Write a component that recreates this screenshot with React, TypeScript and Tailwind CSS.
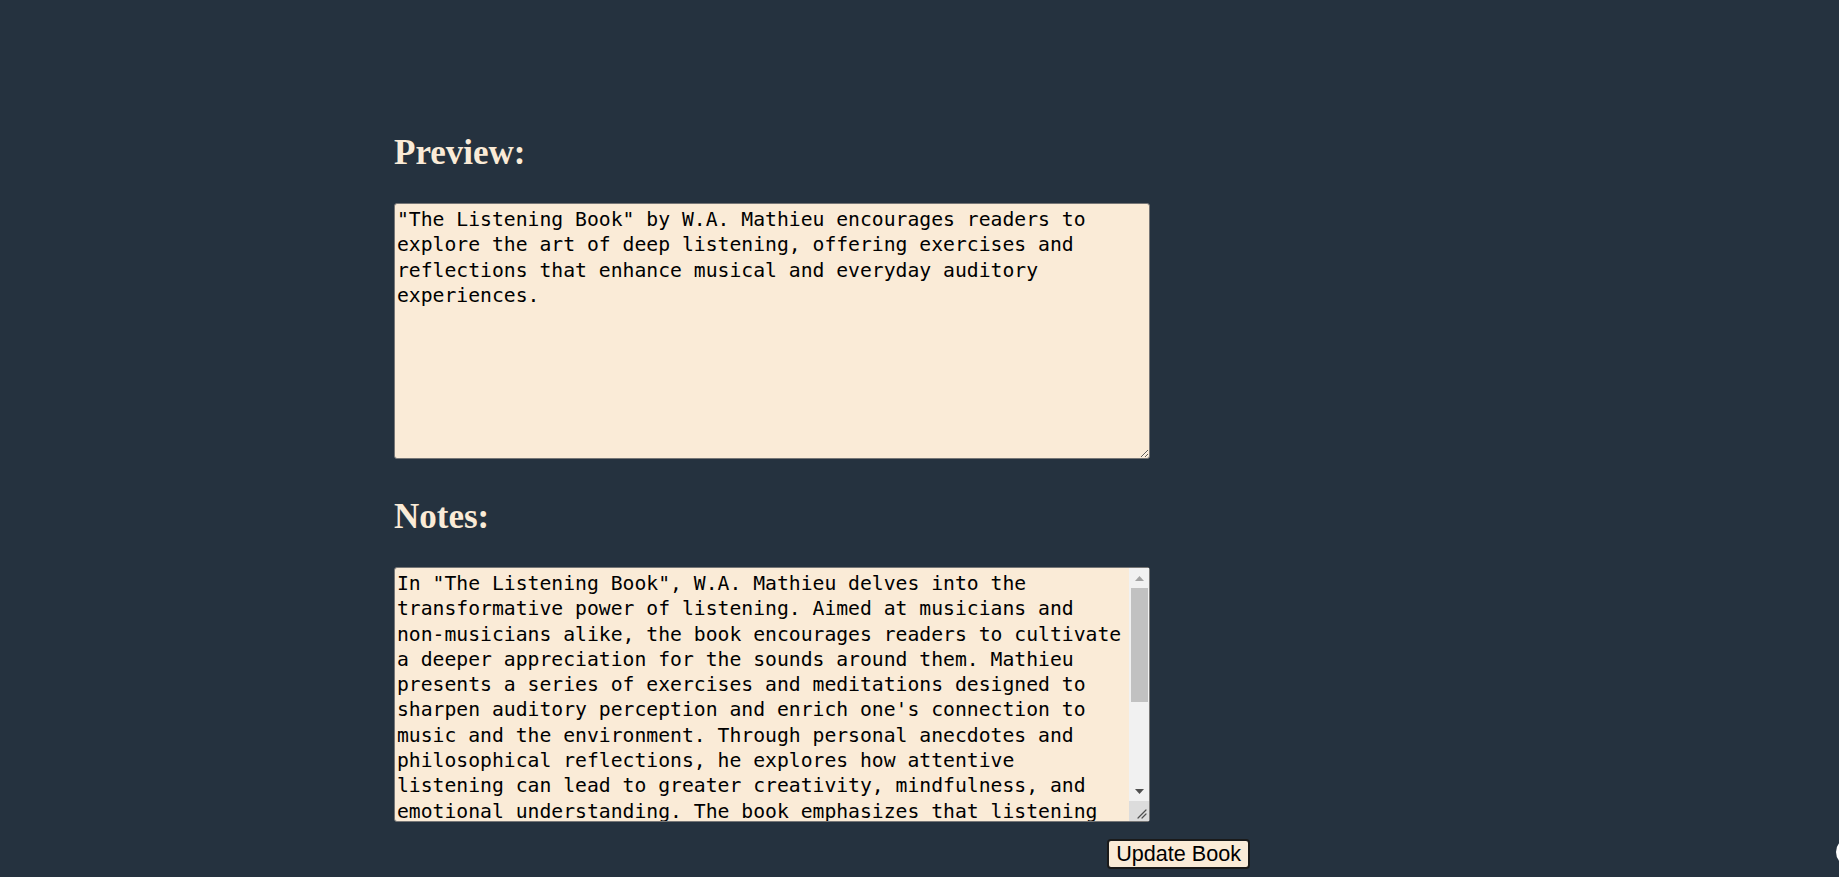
import React, { useState } from "react";

const PREVIEW_TEXT =
    '"The Listening Book" by W.A. Mathieu encourages readers to explore the art of deep listening, offering exercises and reflections that enhance musical and everyday auditory experiences.';

const NOTES_TEXT =
    'In "The Listening Book", W.A. Mathieu delves into the transformative power of listening. Aimed at musicians and non-musicians alike, the book encourages readers to cultivate a deeper appreciation for the sounds around them. Mathieu presents a series of exercises and meditations designed to sharpen auditory perception and enrich one\'s connection to music and the environment. Through personal anecdotes and philosophical reflections, he explores how attentive listening can lead to greater creativity, mindfulness, and emotional understanding. The book emphasizes that listening is not merely a passive act but an active practice, one that can transform the way we experience the world, our relationships, and ourselves. Drawing on his background as a composer and teacher, Mathieu offers gentle guidance and playful prompts that invite readers to slow down, pay attention, and discover the music hidden in everyday life.';

function SectionHeading({ children }: { children: React.ReactNode }) {
    return (
        <h2 className="h-[40px] leading-[40px] text-[35px] font-bold text-[#faebd7] font-['Liberation_Serif',serif] mb-[30px]">
            {children}
        </h2>
    );
}

// Classic scrollbar drawn over the notes box (the headless browser hides native ones)
function FakeScrollbar() {
    return (
        <div className="absolute top-[1px] right-[1px] bottom-[1px] w-[20px] bg-[#f1f1f1] flex flex-col pointer-events-none">
            <div className="h-[20px] flex items-center justify-center">
                <svg className="w-[9px] h-[5px]" viewBox="0 0 9 5">
                    <path d="M4.5 0L9 5H0z" fill="#a3a3a3" />
                </svg>
            </div>
            <div className="h-[114px] ml-[2px] mr-[1px] bg-[#c1c1c1]" />
            <div className="flex-1" />
            <div className="h-[20px] flex items-center justify-center">
                <svg className="w-[9px] h-[5px]" viewBox="0 0 9 5">
                    <path d="M0 0H9L4.5 5z" fill="#505050" />
                </svg>
            </div>
            <div className="h-[20px] bg-[#dcdcdc] flex items-end justify-end">
                <svg className="w-[10px] h-[10px] mr-[2px] mb-[2px]" viewBox="0 0 10 10">
                    <path d="M1 9L9 1M5 9L9 5" stroke="#505050" strokeWidth="1.2" strokeLinecap="round" />
                </svg>
            </div>
        </div>
    );
}

export default function App() {
    const [preview, setPreview] = useState(PREVIEW_TEXT);
    const [notes, setNotes] = useState(NOTES_TEXT);

    return (
        <div className="relative min-h-screen bg-[#25323f] pl-[394px] pt-[133px] overflow-hidden">
            <div className="flex flex-col">
                <SectionHeading>Preview:</SectionHeading>
                <textarea
                    value={preview}
                    onChange={(e) => setPreview(e.target.value)}
                    className="w-[756px] h-[256px] bg-[#faebd7] text-black border border-[#767676] rounded-[3px] px-[2px] pt-[3px] pb-[2px] text-[19.73px] leading-[25.3px] font-['DejaVu_Sans_Mono',monospace] outline-none"
                />

                <div className="mt-[38px]">
                    <SectionHeading>Notes:</SectionHeading>
                </div>
                <div className="relative w-[756px] h-[255px]">
                    <textarea
                        value={notes}
                        onChange={(e) => setNotes(e.target.value)}
                        className="block w-full h-full bg-[#faebd7] text-black border border-[#767676] rounded-[3px] pl-[2px] pr-[22px] pt-[3px] pb-[2px] text-[19.73px] leading-[25.3px] font-['DejaVu_Sans_Mono',monospace] overflow-hidden outline-none"
                    />
                    <FakeScrollbar />
                </div>

                {/* Submit */}
                <div className="w-[856px] flex justify-end mt-[17px]">
                    <button className="h-[30px] px-[7px] bg-[#faebd7] text-black border-2 border-[#1a1a1a] rounded-[4px] text-[21.6px] leading-[24px] font-['Liberation_Sans',Arial,sans-serif]">
                        Update Book
                    </button>
                </div>
            </div>

            {/* floating widget, mostly off-screen */}
            <div className="absolute left-[1836px] top-[838px] w-[28px] h-[28px] rounded-full bg-white" />
        </div>
    );
}
